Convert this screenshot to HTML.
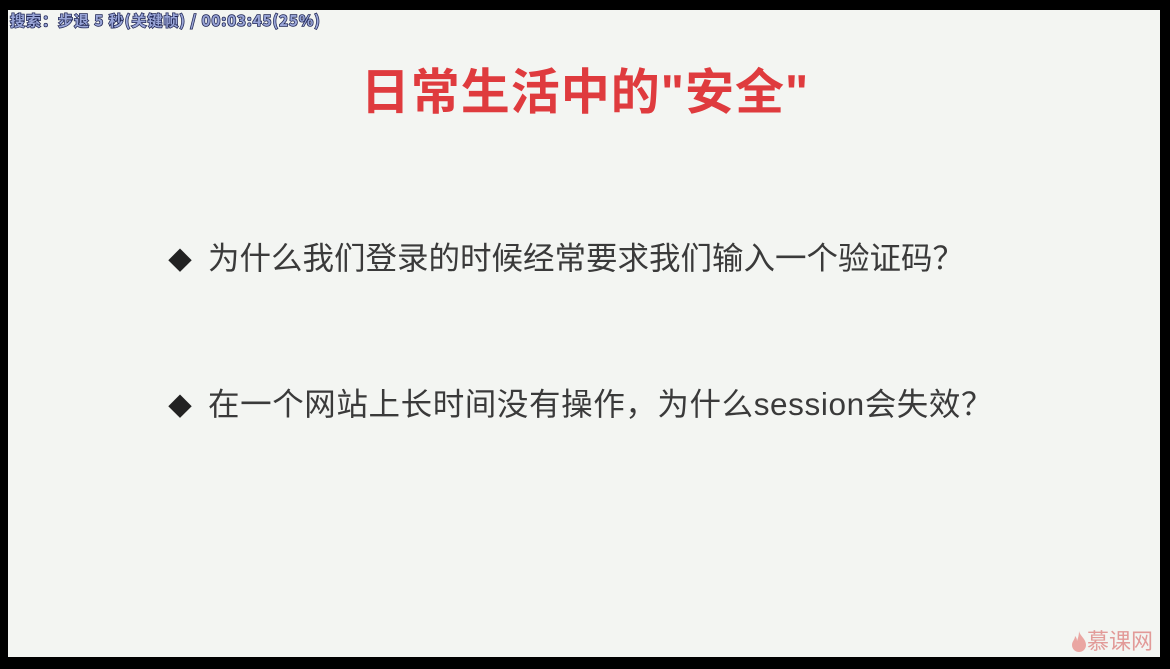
<!DOCTYPE html>
<html><head><meta charset="utf-8"><style>
body{margin:0;width:1170px;height:669px;background:#000;position:relative;overflow:hidden;font-family:"Liberation Sans","Noto Sans CJK SC",sans-serif}
.slide{position:absolute;left:8px;top:10px;width:1152px;height:647px;background:#f3f5f2}
.osd{position:absolute;left:10px;top:10px;font-size:15px;font-weight:bold;color:#9aa6d8;-webkit-text-stroke:1.5px #1e2452;paint-order:stroke;white-space:nowrap;letter-spacing:1px;font-family:"Noto Sans CJK SC",sans-serif}
.title{position:absolute;left:0;width:1170px;top:63px;text-align:center;font-size:49px;font-weight:bold;color:#df3b3e;line-height:60px;letter-spacing:1px}
.b{position:absolute;left:168px;font-size:31.5px;color:#3a3a3a;line-height:44px;white-space:nowrap}
.b span{display:inline-block;font-size:24px;width:40px;color:#222}
.logo{position:absolute;left:1071px;top:624px;font-size:22px;color:#e29a98;white-space:nowrap}
</style></head><body>
<div class="slide"></div>
<div class="osd">搜索：步退 5 秒(关键帧) / 00:03:45(25%)</div>
<div class="title">日常生活中的"安全"</div>
<div class="b" style="top:236px"><span>◆</span>为什么我们登录的时候经常要求我们输入一个验证码？</div>
<div class="b" style="top:382px;letter-spacing:0.6px"><span>◆</span>在一个网站上长时间没有操作，为什么session会失效？</div>
<div class="logo"><svg width="16" height="22" viewBox="0 0 16 22" style="vertical-align:-3px"><path d="M8 1C9 6 15 9 15 15a7 7 0 0 1-14 0c0-4 3-5 3-9 2 2 2 4 2 5 1-3 2-6 2-10z" fill="#eaa6a2"/></svg>慕课网</div>
</body></html>
